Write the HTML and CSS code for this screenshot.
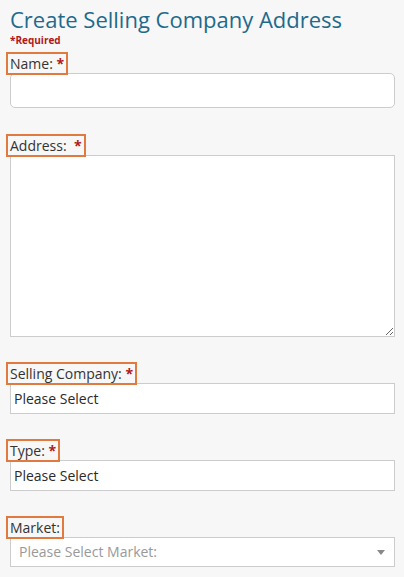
FILE: index.html
```html
<!DOCTYPE html>
<html>
<head>
<meta charset="utf-8">
<link rel="stylesheet" href="styles.css">
</head>
<body>
<div class="page">
  <h1 class="title">Create Selling Company Address</h1>
  <div class="required">*Required</div>

  <div class="field f-name">
    <span class="label">Name: <span class="star">*</span></span>
    <input class="input" type="text">
  </div>

  <div class="field f-address">
    <span class="label">Address: &nbsp;<span class="star">*</span></span>
    <textarea class="textarea"></textarea>
  </div>

  <div class="field f-company">
    <span class="label">Selling Company: <span class="star">*</span></span>
    <div class="select">Please Select</div>
  </div>

  <div class="field f-type">
    <span class="label">Type: <span class="star">*</span></span>
    <div class="select">Please Select</div>
  </div>

  <div class="field f-market">
    <span class="label">Market:</span>
    <div class="select select-market"><span class="placeholder">Please Select Market:</span><span class="arrow"></span></div>
  </div>
</div>
</body>
</html>
```

FILE: styles.css
```css
html, body {
  margin: 0;
  padding: 0;
  background: #f7f7f7;
}
.page {
  padding: 0 9px 0 10px;
  font-family: "Open Sans", "Liberation Sans", sans-serif;
  color: #333;
  display: flex;
  flex-direction: column;
  align-items: stretch;
}
.title {
  margin: 4px 0 0 0;
  font-size: 22px;
  font-weight: 400;
  line-height: 30px;
  color: #1e6a8c;
}
.required {
  margin-top: 0;
  font-size: 10px;
  font-weight: 700;
  line-height: 12px;
  color: #b0191b;
}
.field {
  display: flex;
  flex-direction: column;
  align-items: flex-start;
}
.label {
  display: inline-block;
  margin-left: -4px;
  margin-bottom: -2px;
  border: 2px solid #e07a3e;
  padding: 1px 2px 1px 2px;
  font-size: 14px;
  line-height: 17px;
  color: #333;
  position: relative;
  z-index: 1;
}
.star {
  color: #b0191b;
  font-weight: 700;
}
.f-name { margin-top: 6px; }
.f-address { margin-top: 26px; }
.f-company { margin-top: 25px; }
.f-type { margin-top: 25px; }
.f-market { margin-top: 25px; }

.input {
  box-sizing: border-box;
  width: 100%;
  height: 35px;
  margin: 0;
  border: 1px solid #ccc;
  border-radius: 5px;
  background: #fff;
  outline: none;
}
.textarea {
  box-sizing: border-box;
  display: block;
  width: 100%;
  height: 182px;
  margin: 0;
  border: 1px solid #ccc;
  border-radius: 0;
  background: #fff;
  outline: none;
}
.select {
  box-sizing: border-box;
  width: 100%;
  height: 31px;
  border: 1px solid #ccc;
  background: #fff;
  padding: 0 3px;
  font-size: 14px;
  font-weight: 400;
  line-height: 29px;
  color: #2a2a2a;
}
.select-market {
  height: 30px;
  line-height: 28px;
  padding: 0 8px;
  display: flex;
  justify-content: space-between;
  align-items: center;
}
.placeholder {
  color: #999;
}
.arrow {
  width: 0;
  height: 0;
  border-left: 4px solid transparent;
  border-right: 4px solid transparent;
  border-top: 5px solid #888;
  margin-right: 1px;
}
```
